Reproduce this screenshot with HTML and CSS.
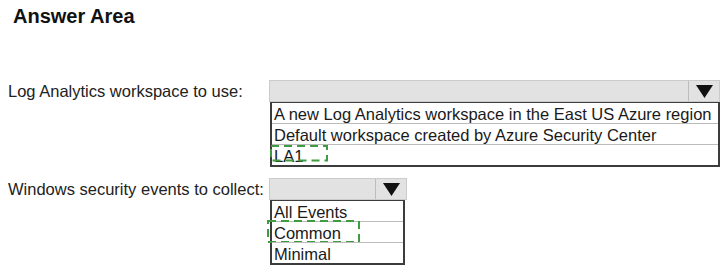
FILE: index.html
```html
<!DOCTYPE html>
<html>
<head>
<meta charset="utf-8">
<link rel="stylesheet" href="styles.css">
</head>
<body>
<div class="page">
  <h1 class="title">Answer Area</h1>
  <div class="qa">
    <div class="row row-first">
      <div class="label">Log Analytics workspace to use:</div>
      <div class="dd dd-wide">
        <div class="dd-head">
          <span class="dd-field"></span>
          <span class="dd-arrow"><svg width="17" height="13" viewBox="0 0 17 13"><polygon points="0,0 17,0 8.5,13" fill="#111"/></svg></span>
        </div>
        <ul class="dd-list">
          <li>A new Log Analytics workspace in the East US Azure region</li>
          <li>Default workspace created by Azure Security Center</li>
          <li class="sel">LA1<svg class="mark mark-la1" width="60" height="18" viewBox="0 0 60 18"><rect x="1" y="1" width="56" height="14.5" fill="none" stroke="#3f9b3f" stroke-width="2" stroke-dasharray="8 5"/></svg></li>
        </ul>
      </div>
    </div>
    <div class="row row-second">
      <div class="label">Windows security events to collect:</div>
      <div class="dd dd-narrow">
        <div class="dd-head">
          <span class="dd-field"></span>
          <span class="dd-arrow"><svg width="17" height="13" viewBox="0 0 17 13"><polygon points="0,0 17,0 8.5,13" fill="#111"/></svg></span>
        </div>
        <ul class="dd-list">
          <li>All Events</li>
          <li class="sel">Common<svg class="mark mark-common" width="96" height="24" viewBox="0 0 96 24"><rect x="1" y="1" width="91" height="21" fill="none" stroke="#3f9b3f" stroke-width="2" stroke-dasharray="8 5"/></svg></li>
          <li>Minimal</li>
        </ul>
      </div>
    </div>
  </div>
</div>
</body>
</html>
```
FILE: styles.css
```css
html, body {
  margin: 0;
  padding: 0;
  background: #ffffff;
}
body {
  font-family: "Liberation Sans", Arial, sans-serif;
  color: #1e1e1e;
  width: 724px;
  height: 277px;
  overflow: hidden;
}
.page {
  display: flex;
  flex-direction: column;
}
.title {
  margin: 4px 0 0 13px;
  font-size: 20px;
  line-height: 24px;
  font-weight: bold;
  color: #111;
}
.qa {
  display: flex;
  flex-direction: column;
  gap: 11px;
  margin-top: 52px;
}
.row {
  display: grid;
  grid-template-columns: 269px auto;
  align-items: start;
}
.label {
  padding-left: 8px;
  font-size: 16.5px;
  line-height: 22px;
  color: #222;
  white-space: nowrap;
}
.dd {
  display: flex;
  flex-direction: column;
}
.dd-wide { width: 451px; }
.dd-narrow { width: 138px; }
.dd-head {
  display: flex;
  height: 22px;
  box-sizing: border-box;
  background: #e2e2e2;
  border: 1px solid #cbcbcb;
}
.dd-field {
  flex: 1;
}
.dd-arrow {
  width: 30px;
  border-left: 1px solid #bdbdbd;
  display: flex;
  justify-content: center;
  align-items: center;
}
.dd-narrow .dd-arrow {
  width: 30px;
}
.dd-list {
  list-style: none;
  margin: 0 0 0 1px;
  padding: 0;
  border: 2px solid #3c3c3c;
  border-top: 1px solid #3c3c3c;
}
.dd-narrow .dd-list {
  margin-right: 2px;
}
.dd-list li {
  position: relative;
  height: 20px;
  line-height: 22px;
  padding-left: 2px;
  font-size: 16.5px;
  color: #1a1a1a;
  white-space: nowrap;
}
.dd-list li + li {
  border-top: 1px solid #bcbcbc;
}
.mark {
  position: absolute;
  pointer-events: none;
}
.mark-la1 {
  left: -2px;
  top: 0px;
}
.mark-common {
  left: -5px;
  top: -2px;
}
```
